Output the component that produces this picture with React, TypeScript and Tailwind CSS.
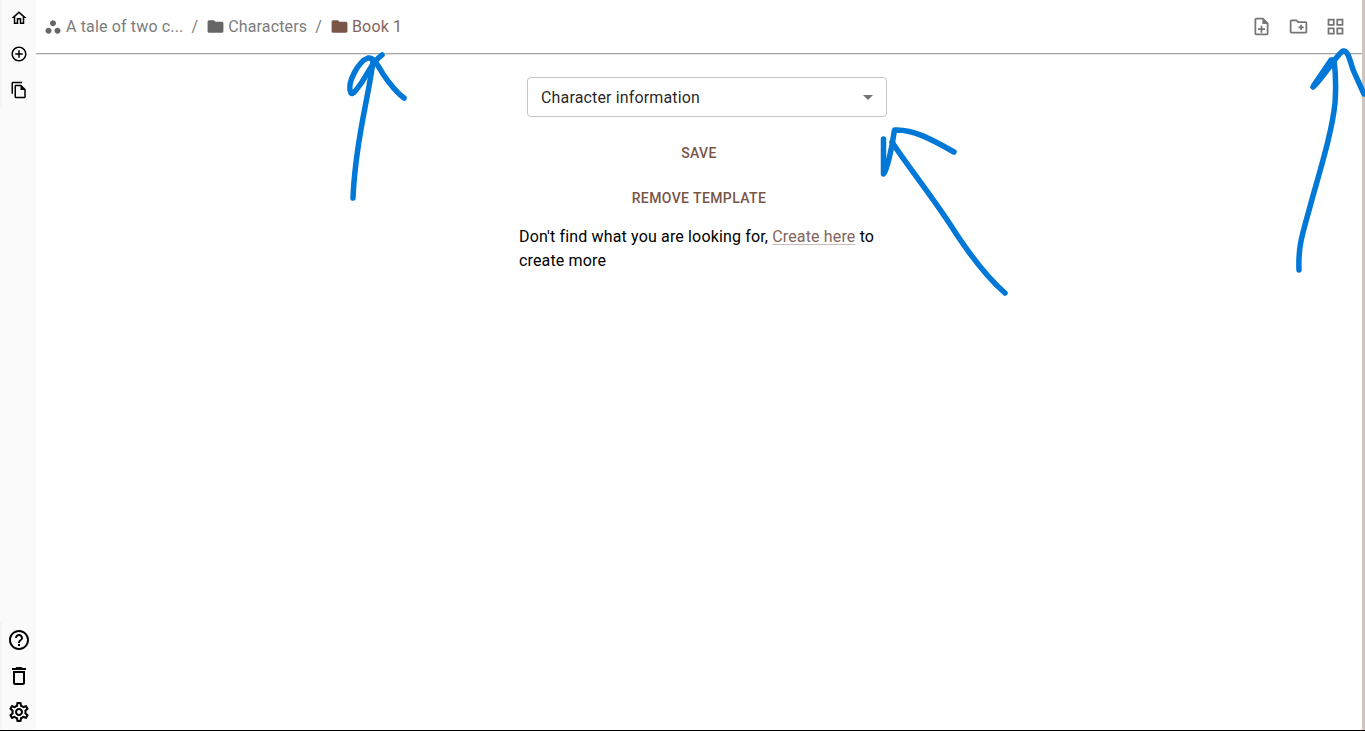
import type { ReactNode } from "react";
import {
  MdAddCircleOutline,
  MdArrowDropDown,
  MdDeleteOutline,
  MdFolder,
  MdHelpOutline,
  MdOutlineCreateNewFolder,
  MdOutlineFileCopy,
  MdOutlineGridView,
  MdOutlineHome,
  MdOutlineNoteAdd,
  MdOutlineSettings,
  MdWorkspaces,
} from "react-icons/md";

function NavButton({ label, children }: { label: string; children: ReactNode }) {
  return (
    <button aria-label={label} className="flex h-9 w-[34px] items-center justify-center text-black">
      {children}
    </button>
  );
}

function Sidebar() {
  return (
    <nav className="flex w-9 shrink-0 flex-col justify-between bg-[#fafafa]">
      <div className="flex h-[108px] flex-col border-l-2 border-[#f5f5f5]">
        <NavButton label="Home"><MdOutlineHome size={18} /></NavButton>
        <NavButton label="Add"><MdAddCircleOutline size={18} /></NavButton>
        <NavButton label="Templates"><MdOutlineFileCopy size={18} /></NavButton>
      </div>
      <div className="flex h-[108px] flex-col border-l-2 border-[#f5f5f5]">
        <NavButton label="Help"><MdHelpOutline size={24} /></NavButton>
        <NavButton label="Trash"><MdDeleteOutline size={24} /></NavButton>
        <NavButton label="Settings"><MdOutlineSettings size={24} /></NavButton>
      </div>
    </nav>
  );
}

function Header() {
  return (
    <header className="flex h-[54px] shrink-0 items-center justify-between border-b border-[#a6a6a6] pr-2 pl-2 shadow-[0_1px_0_#e4e4e4]">
      <div className="flex items-center text-base leading-6 tracking-[0.15px] text-[#7c7c7c]">
        <MdWorkspaces size={18} className="mr-1 text-[#666]" />
        <span>A tale of two c...</span>
        <span className="mx-2">/</span>
        <MdFolder size={19} className="mr-[3px] text-[#666]" />
        <span>Characters</span>
        <span className="mx-2">/</span>
        <MdFolder size={19} className="mr-[3px] text-[#795548]" />
        <span className="text-[#84645a]">Book 1</span>
      </div>
      <div className="flex items-center gap-4 pr-2 pb-px text-[#757575]">
        <MdOutlineNoteAdd size={21} />
        <MdOutlineCreateNewFolder size={21} />
        <MdOutlineGridView size={21} />
      </div>
    </header>
  );
}

function TemplatePicker() {
  return (
    <section className="mx-auto flex w-[376px] flex-col pt-[23px] pl-2 text-base leading-6 tracking-[0.15px] text-black/87">
      <button className="flex h-10 w-[360px] items-center justify-between self-end rounded border border-[#c4c4c4] pr-[6px] pl-[13px] tracking-[0.15px]">
        <span className="pt-px">Character information</span>
        <MdArrowDropDown size={24} className="text-[#757575]" />
      </button>
      <div className="flex w-[360px] flex-col items-center pt-[18px] text-sm font-medium tracking-[0.4px] text-[#795548]">
        <button className="h-9">SAVE</button>
        <button className="mt-[9px] h-9">REMOVE TEMPLATE</button>
      </div>
      <p className="mt-[9px] w-[360px] text-black">
        Don't find what you are looking for,{" "}
        <a className="text-[#84645a] underline decoration-[#795548]/40 underline-offset-2">Create here</a> to
        create more
      </p>
    </section>
  );
}

function Arrows() {
  return (
    <svg
      className="pointer-events-none absolute inset-0"
      width="1365"
      height="731"
      viewBox="0 0 1365 731"
      fill="none"
      stroke="#0078d7"
      strokeWidth="5.5"
      strokeLinecap="round"
      strokeLinejoin="round"
    >
      <path d="M353 198C354 173 358 145 363 118C367 96 371 79 373 61" />
      <path d="M382 55C374 60 369 71 362 82C357 89 353 95 351 93C346 83 359 61 368 58C374 57 378 66 383 74C389 83 396 92 404 98" />
      <path d="M1005 293C990 280 973 259 957 235C934 198 908 167 892 142" />
      <path d="M883.5 139V174C887 171 890 155 892 145L894.5 130C913 129 933 140 954 152" />
      <path d="M1299 270C1298 244 1303 233 1311 203C1321 167 1332 132 1335 103C1336 89 1336 75 1334 60" />
      <path d="M1313 87C1324 77 1337 54 1343 51C1349 50 1350 63 1354 72L1364 94" />
      <path d="M1314 85L1331 60L1334 60M1317 82L1333 62" />
    </svg>
  );
}

export default function App() {
  return (
    <div className="relative flex h-[731px] w-full overflow-hidden border-b border-black bg-white font-[Roboto,sans-serif]">
      <Sidebar />
      <main className="flex min-w-0 flex-1 flex-col">
        <Header />
        <TemplatePicker />
      </main>
      <div className="w-[3px] shrink-0 bg-[#d0c4c0]" />
      <Arrows />
    </div>
  );
}
